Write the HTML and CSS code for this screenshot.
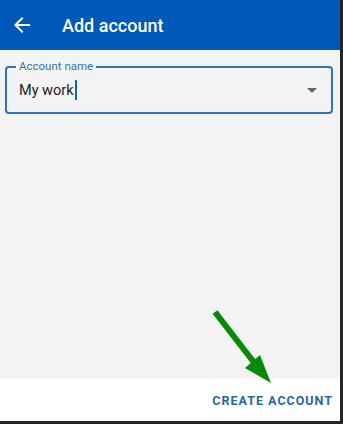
FILE: index.html
```html
<!DOCTYPE html>
<html lang="en">
<head>
	<meta charset="UTF-8">
	<title>Add account</title>
	<link rel="stylesheet" href="styles.css">
</head>
<body>
	<div class="frame">
		<div class="screen">
			<header class="app-bar">
				<svg class="back" width="24" height="24" viewBox="0 0 24 24">
					<path d="M20 11H7.83l5.59-5.59L12 4l-8 8 8 8 1.41-1.41L7.83 13H20v-2z" fill="#fff"/>
				</svg>
				<h1>Add account</h1>
			</header>
			<main class="content">
				<div class="field">
					<span class="label">Account name</span>
					<span class="value">My work</span><span class="caret"></span>
					<span class="dropdown"></span>
				</div>
			</main>
			<footer class="actions">
				<button class="create">Create account</button>
			</footer>
			<svg class="pointer" width="80" height="90" viewBox="0 0 80 90">
				<line x1="3" y1="3" x2="44" y2="56" stroke="#078a07" stroke-width="6"/>
				<polygon points="59,74 33,59 48,46" fill="#078a07"/>
			</svg>
		</div>
	</div>
</body>
</html>
```

FILE: styles.css
```css
body {
	margin: 0;
	font-family: Roboto, "Noto Sans", sans-serif;
	background-color: #262626;
}

.frame {
	width: 340px;
	height: 421px;
	overflow: hidden;
}

.screen {
	position: relative;
	height: 100%;
	display: flex;
	flex-direction: column;
	background-color: #f3f3f3;
}

.app-bar {
	height: 50px;
	flex-shrink: 0;
	display: flex;
	align-items: center;
	background-color: #0058b8;
	padding-left: 10px;
	box-sizing: border-box;
}

.back {
	margin-right: 28px;
}

.app-bar h1 {
	margin: 0;
	font-size: 18px;
	font-weight: 500;
	color: #ffffff;
}

.content {
	flex: 1;
	padding: 16px 7px 0 5px;
}

.field {
	position: relative;
	height: 48px;
	box-sizing: border-box;
	border: 2px solid #2f73bd;
	border-radius: 4px;
	padding: 0 14px 0 12px;
	display: flex;
	align-items: center;
}

.label {
	position: absolute;
	left: 9px;
	top: -8px;
	font-size: 11.5px;
	line-height: 13px;
	color: #3674b8;
	padding: 0 3px;
	background-color: #f3f3f3;
}

.value {
	font-size: 14.5px;
	color: #222222;
}

.caret {
	width: 2px;
	height: 20px;
	background-color: #1a62b8;
	margin-left: 1px;
}

.dropdown {
	margin-left: auto;
	width: 0;
	height: 0;
	border-left: 5px solid transparent;
	border-right: 5px solid transparent;
	border-top: 5px solid #666666;
}

.actions {
	height: 42px;
	flex-shrink: 0;
	background-color: #ffffff;
	display: flex;
	justify-content: flex-end;
	align-items: center;
}

.create {
	border: none;
	background: none;
	font-family: Roboto, sans-serif;
	font-size: 12.5px;
	font-weight: 700;
	letter-spacing: 1px;
	text-transform: uppercase;
	color: #2a66a8;
	padding: 0 7px 0 0;
}

.pointer {
	position: absolute;
	left: 212px;
	top: 309px;
}
```
